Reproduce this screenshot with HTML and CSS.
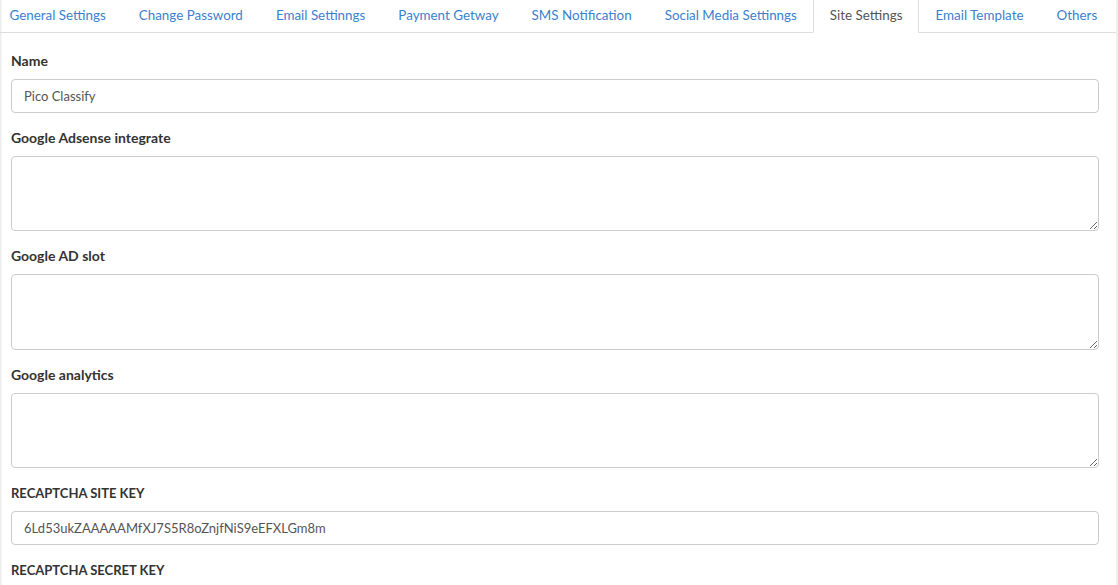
FILE: index.html
```html
<!DOCTYPE html>
<html>
<head>
<meta charset="utf-8">
<link rel="stylesheet" href="styles.css">
</head>
<body>
<div class="panel">
  <ul class="tabs">
    <li class="tab"><a>General Settings</a></li>
    <li class="tab"><a>Change Password</a></li>
    <li class="tab"><a>Email Settinngs</a></li>
    <li class="tab"><a>Payment Getway</a></li>
    <li class="tab"><a>SMS Notification</a></li>
    <li class="tab"><a>Social Media Settinngs</a></li>
    <li class="tab active"><a>Site Settings</a></li>
    <li class="tab"><a>Email Template</a></li>
    <li class="tab"><a>Others</a></li>
  </ul>
  <form class="content">
    <div class="group">
      <label class="label">Name</label>
      <input class="control" type="text" value="Pico Classify">
    </div>
    <div class="group">
      <label class="label">Google Adsense integrate</label>
      <textarea class="control area"></textarea>
    </div>
    <div class="group">
      <label class="label">Google AD slot</label>
      <textarea class="control area"></textarea>
    </div>
    <div class="group">
      <label class="label">Google analytics</label>
      <textarea class="control area"></textarea>
    </div>
    <div class="group">
      <label class="label caps">RECAPTCHA SITE KEY</label>
      <input class="control" type="text" value="6Ld53ukZAAAAAMfXJ7S5R8oZnjfNiS9eEFXLGm8m">
    </div>
    <div class="group">
      <label class="label caps">RECAPTCHA SECRET KEY</label>
      <input class="control" type="text" value="">
    </div>
  </form>
</div>
</body>
</html>
```
FILE: styles.css
```css
html, body {
  margin: 0;
  padding: 0;
}
body {
  background: #ecf0f5;
  font-family: "Lato", "Liberation Sans", sans-serif;
  font-size: 14px;
  color: #333;
  overflow: hidden;
  height: 585px;
}
.panel {
  width: 1116px;
  background: #fff;
  min-height: 585px;
  box-shadow: inset 2px 0 2px -1px #e6e6e6;
}
.tabs {
  list-style: none;
  margin: 0;
  padding: 0;
  display: flex;
  border-bottom: 1px solid #ddd;
  height: 32px;
}
.tab {
  margin-bottom: -1px;
  flex-shrink: 0;
  white-space: nowrap;
}
.tab:first-child {
  margin-left: -7px;
}
.tab a {
  display: block;
  height: 32px;
  box-sizing: border-box;
  padding: 5px 15.5px 0;
  line-height: 20px;
  font-size: 13.4px;
  color: #3c7fcf;
  border: 1px solid transparent;
  border-top: none;
  cursor: pointer;
}
.tab.active a {
  color: #555;
  background: #fff;
  border-color: #ddd;
  border-bottom-color: #fff;
  height: 33px;
}
.content {
  padding: 18px 18px 0 11px;
}
.group {
  margin-bottom: 15px;
}
.label {
  display: block;
  font-weight: 700;
  line-height: 20px;
  margin-bottom: 8px;
  color: #333;
}
.label.caps {
  font-size: 13px;
}
.control {
  display: block;
  box-sizing: border-box;
  width: 1088px;
  height: 34px;
  padding: 6px 12px;
  font-family: inherit;
  font-size: 13px;
  line-height: 20px;
  color: #555;
  border: 1px solid #ccc;
  border-radius: 4px;
  background: #fff;
  margin: 0;
  outline: none;
}
.area {
  height: 75.4px;
  resize: vertical;
}
```
